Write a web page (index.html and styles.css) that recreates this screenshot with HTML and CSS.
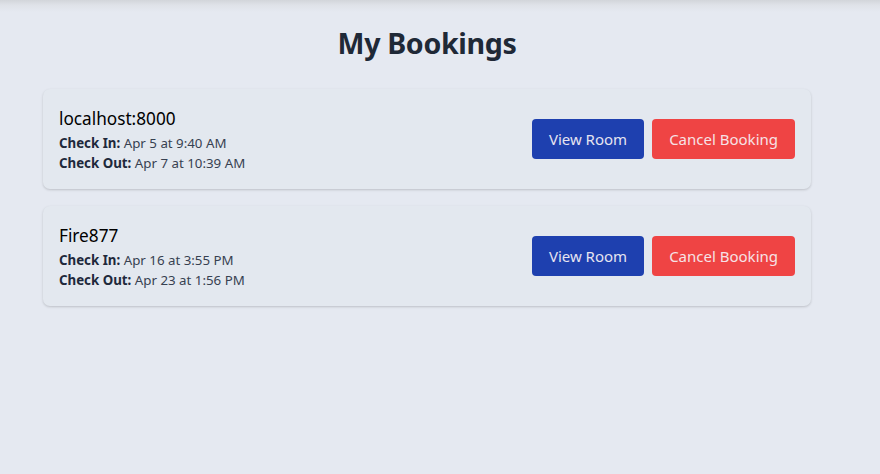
FILE: index.html
```html
<!DOCTYPE html>
<html lang="en">
<head>
<meta charset="utf-8">
<title>My Bookings</title>
<link rel="stylesheet" href="styles.css">
</head>
<body>
<main class="page">
  <h1 class="title">My Bookings</h1>
  <div class="list">
    <div class="card">
      <div class="info">
        <div class="name">localhost:8000</div>
        <div class="line"><span class="label">Check In:</span> Apr 5 at 9:40 AM</div>
        <div class="line"><span class="label">Check Out:</span> Apr 7 at 10:39 AM</div>
      </div>
      <div class="actions">
        <button class="btn btn-view">View Room</button>
        <button class="btn btn-cancel">Cancel Booking</button>
      </div>
    </div>
    <div class="card">
      <div class="info">
        <div class="name">Fire877</div>
        <div class="line"><span class="label">Check In:</span> Apr 16 at 3:55 PM</div>
        <div class="line"><span class="label">Check Out:</span> Apr 23 at 1:56 PM</div>
      </div>
      <div class="actions">
        <button class="btn btn-view">View Room</button>
        <button class="btn btn-cancel">Cancel Booking</button>
      </div>
    </div>
  </div>
</main>
</body>
</html>
```
FILE: styles.css
```css
html, body {
  margin: 0;
  padding: 0;
  height: 100%;
}
body {
  background-color: #e5e9f1;
  background-image: linear-gradient(to bottom, #d2d5da 0px, #dfe2e8 5px, #e5e9f1 12px);
  background-repeat: no-repeat;
  font-family: "Noto Sans", "Open Sans", "Liberation Sans", sans-serif;
  color: #111827;
}
.page {
  width: 768px;
  margin-left: 43px;
  padding-top: 25px;
}
.title {
  margin: 0 0 28px 0;
  text-align: center;
  font-size: 28.6px;
  line-height: 36px;
  font-weight: 700;
  color: #1f2937;
  letter-spacing: -0.35px;
}
.list {
  display: flex;
  flex-direction: column;
  gap: 17px;
}
.card {
  display: flex;
  align-items: center;
  justify-content: space-between;
  padding: 16px;
  background: #e3e8ef;
  border-radius: 7px;
  box-shadow: 0 1px 3px rgba(0, 0, 0, 0.12), 0 1px 2px rgba(0, 0, 0, 0.06);
}
.name {
  font-size: 17.2px;
  line-height: 28px;
  color: #000000;
}
.line {
  font-size: 13.3px;
  line-height: 20px;
  color: #374151;
}
.label {
  font-weight: 700;
  color: #1e293b;
}
.actions {
  display: flex;
  gap: 8px;
}
.btn {
  font-family: inherit;
  font-size: 15px;
  line-height: 24px;
  padding: 8px 17px;
  border: none;
  border-radius: 4px;
  color: #e6e4f0;
  cursor: pointer;
}
.btn-view {
  background: #1e40af;
}
.btn-cancel {
  background: #ef4444;
  color: #f6e2e6;
}
```
